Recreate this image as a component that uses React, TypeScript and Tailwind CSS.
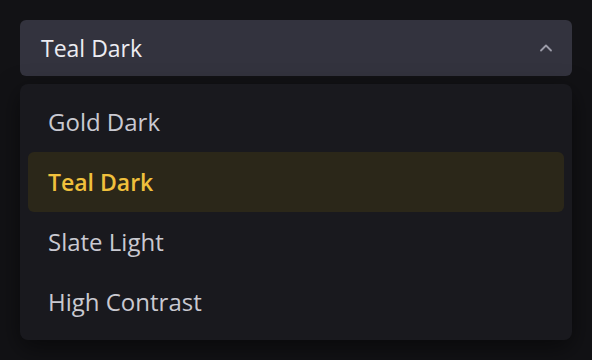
import { ChevronUp } from 'lucide-react';

const themes = ['Gold Dark', 'Teal Dark', 'Slate Light', 'High Contrast'];

export default function App() {
  const selected = 'Teal Dark';

  return (
    <div className="min-h-screen w-full bg-[#121215] p-5 font-['Open_Sans',sans-serif]">
      <button className="flex h-14 w-full items-center justify-between rounded-md bg-[#33333e] pl-[21px] pr-4 text-[23px] text-[#ececf2]">
        <span>{selected}</span>
        <ChevronUp size={20} strokeWidth={2.2} className="text-[#9c9ca8]" />
      </button>
      <div className="mt-2 flex flex-col rounded-lg bg-[#19191e] p-2 shadow-[0_8px_24px_rgba(0,0,0,0.5)]">
        {themes.map((t) => {
          const active = t === selected;
          return (
            <div
              key={t}
              className={
                active
                  ? 'flex h-[60px] items-center rounded-md bg-[#2b2719] px-5 text-[23px] font-semibold text-[#f0c03c]'
                  : 'flex h-[60px] items-center rounded-md px-5 text-[24px] text-[#c9c9d1]'
              }
            >
              {t}
            </div>
          );
        })}
      </div>
    </div>
  );
}
